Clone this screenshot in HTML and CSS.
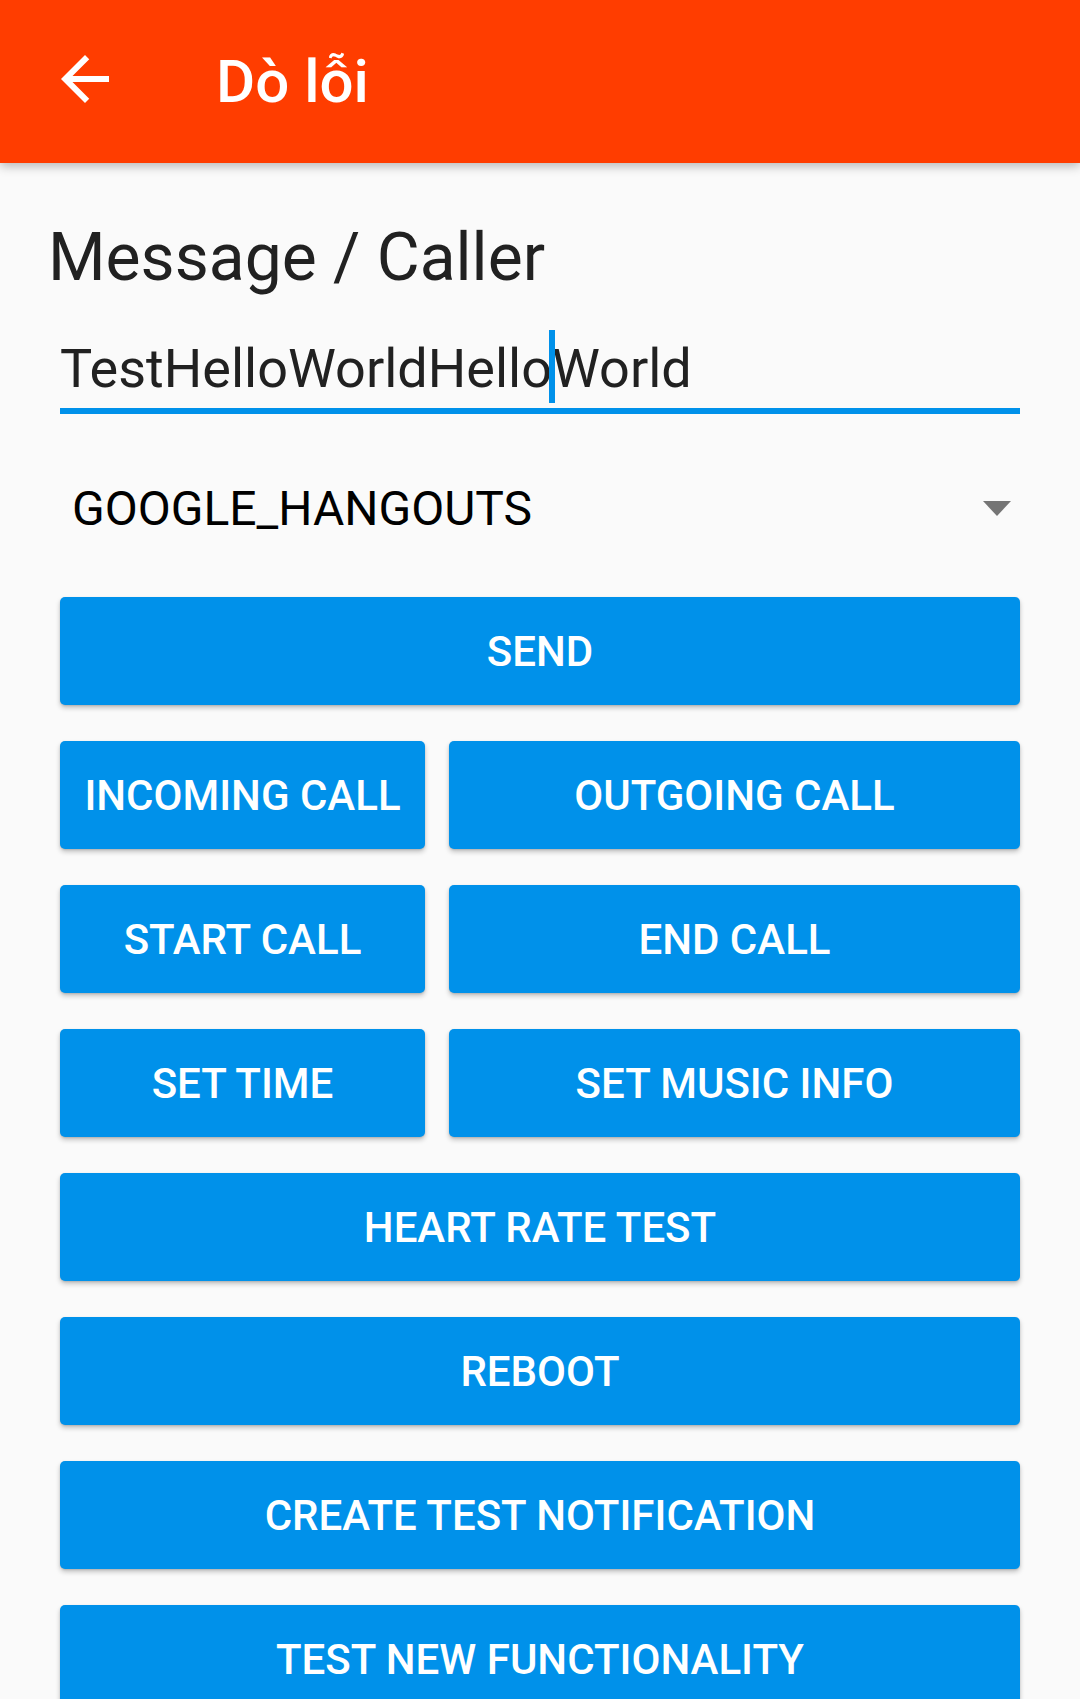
FILE: index.html
```html
<!DOCTYPE html>
<html lang="vi">
<head>
<meta charset="utf-8">
<title>Dò lỗi</title>
<link rel="stylesheet" href="styles.css">
</head>
<body>
<header class="appbar">
  <svg class="back" viewBox="0 0 24 24" width="72" height="72" aria-hidden="true">
    <path d="M20 11H7.83l5.59-5.59L12 4l-8 8 8 8 1.41-1.41L7.83 13H20v-2z" fill="#fff"/>
  </svg>
  <h1 class="title">Dò lỗi</h1>
</header>
<main class="content">
  <h2 class="label">Message / Caller</h2>
  <div class="field">
    <div class="field-text">TestHelloWorldHello<span class="cursor"></span>World</div>
  </div>
  <div class="spinner">
    <span class="spinner-text">GOOGLE_HANGOUTS</span>
    <span class="caret"></span>
  </div>
  <div class="buttons">
    <button class="btn wide">SEND</button>
    <button class="btn">INCOMING CALL</button>
    <button class="btn">OUTGOING CALL</button>
    <button class="btn">START CALL</button>
    <button class="btn">END CALL</button>
    <button class="btn">SET TIME</button>
    <button class="btn">SET MUSIC INFO</button>
    <button class="btn wide">HEART RATE TEST</button>
    <button class="btn wide">REBOOT</button>
    <button class="btn wide">CREATE TEST NOTIFICATION</button>
    <button class="btn wide">TEST NEW FUNCTIONALITY</button>
  </div>
</main>
</body>
</html>
```
FILE: styles.css
```css
html, body {
  margin: 0;
  padding: 0;
  background: #fafafa;
  font-family: Roboto, "Liberation Sans", sans-serif;
  overflow: hidden;
}

.appbar {
  position: relative;
  z-index: 2;
  height: 163px;
  background: #ff3d00;
  display: flex;
  align-items: center;
  box-shadow: 0 3px 10px rgba(0, 0, 0, 0.28);
}

.back {
  margin-left: 49px;
  margin-bottom: 5px;
  display: block;
}

.title {
  margin: 0 0 0 95px;
  color: #fff;
  font-size: 60px;
  font-weight: 500;
  line-height: 70px;
}

.content {
  padding: 0 60px;
}

.label {
  margin: 55px 0 0 -12px;
  font-size: 66px;
  font-weight: 400;
  line-height: 80px;
  color: #212121;
}

.field {
  margin-top: 31px;
  border-bottom: 6px solid #0091ea;
}

.field-text {
  height: 79px;
  font-size: 54px;
  line-height: 80px;
  color: #212121;
  white-space: nowrap;
}

.cursor {
  display: inline-block;
  width: 6px;
  height: 73px;
  margin: 0 -3px;
  background: #0091ea;
  vertical-align: top;
  position: relative;
  top: 1px;
}

.spinner {
  height: 177px;
  padding: 6px 9px 0 12px;
  display: flex;
  align-items: center;
  justify-content: space-between;
}

.spinner-text {
  font-size: 48px;
  line-height: 60px;
  color: #000;
}

.caret {
  width: 0;
  height: 0;
  border-left: 14.5px solid transparent;
  border-right: 14.5px solid transparent;
  border-top: 15px solid #757575;
}

.buttons {
  display: grid;
  grid-template-columns: 365px 1fr;
  column-gap: 24px;
  row-gap: 36px;
}

.btn {
  height: 108px;
  border: 0;
  border-radius: 5px;
  background: #0091ea;
  color: #fff;
  font-family: Roboto, "Liberation Sans", sans-serif;
  font-size: 42px;
  font-weight: 500;
  padding: 0;
  box-shadow: 0 3px 5px rgba(0, 0, 0, 0.22), 0 1px 2px rgba(0, 0, 0, 0.12);
}

.wide {
  grid-column: 1 / -1;
}
```
